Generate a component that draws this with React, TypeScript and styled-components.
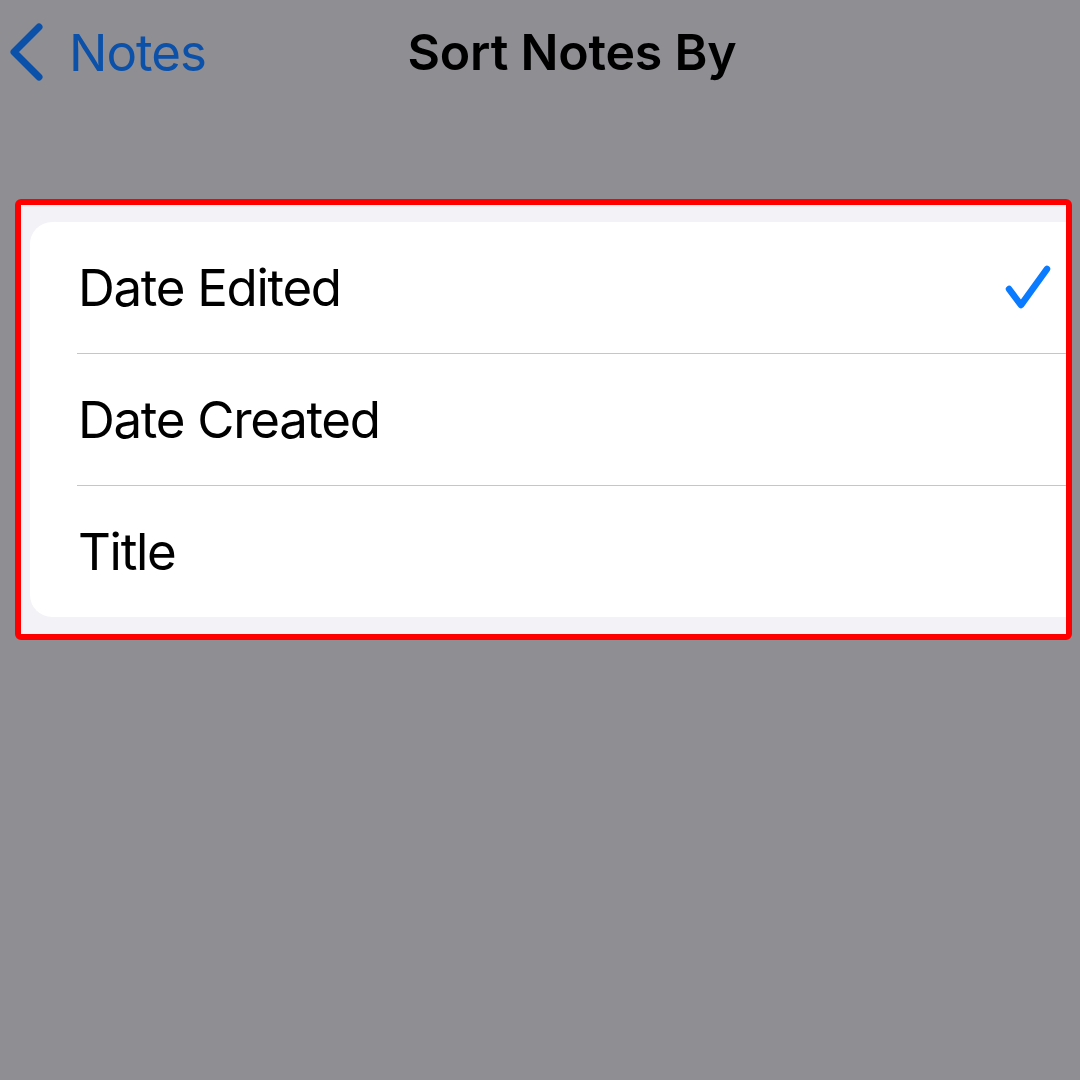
import React from "react";
import styled, { createGlobalStyle } from "styled-components";

const sortOptions = [
  { label: "Date Edited", selected: true },
  { label: "Date Created", selected: false },
  { label: "Title", selected: false },
];

const GlobalStyle = createGlobalStyle`
  html, body {
    margin: 0;
    padding: 0;
    background: #8e8e93;
  }
  body {
    font-family: Inter, "Noto Sans", sans-serif;
    -webkit-font-smoothing: antialiased;
  }
`;

const Screen = styled.div`
  width: 1080px;
  height: 1080px;
  background: #8e8e93;
  overflow: hidden;
  display: flex;
  flex-direction: column;
`;

const NavBar = styled.header`
  height: 104px;
  display: grid;
  grid-template-columns: 1fr auto 1fr;
  align-items: center;
  padding: 0 0 0 9px;
`;

const BackButton = styled.div`
  display: flex;
  align-items: center;
  gap: 26px;
  color: #0c51a9;
  font-size: 51px;
  font-weight: 400;
  letter-spacing: -1px;
`;

const NavTitle = styled.h1`
  margin: 0 0 0 55px;
  font-size: 50px;
  font-weight: 600;
  color: #000;
  letter-spacing: -0.2px;
`;

const Highlight = styled.section`
  margin: 95px 0 0 15px;
  width: 1057px;
  box-sizing: border-box;
  border: 6px solid #ff0000;
  border-radius: 6px;
  background: #f2f2f7;
  padding: 17px 0 17px 9px;
`;

const Card = styled.ul`
  list-style: none;
  margin: 0;
  padding: 0;
  background: #fff;
  border-radius: 22px 0 0 22px;
`;

const Row = styled.li`
  padding-left: 47px;
`;

const RowInner = styled.div<{ $last?: boolean }>`
  height: 131px;
  display: flex;
  align-items: center;
  justify-content: space-between;
  padding-right: 15px;
  border-bottom: ${(p) => (p.$last ? "none" : "1px solid #c6c6c8")};
  font-size: 51px;
  color: #000;
  letter-spacing: -1.3px;
`;

const Label = styled.span`
  padding-left: 1px;
`;

const Chevron = () => (
  <svg width="34" height="58" viewBox="0 0 34 58">
    <path
      d="M30 4 L5 29 L30 54"
      fill="none"
      stroke="currentColor"
      strokeWidth="7"
      strokeLinecap="round"
      strokeLinejoin="round"
    />
  </svg>
);

const Check = () => (
  <svg width="46" height="46" viewBox="0 0 46 46">
    <path
      d="M4 24 L16 40 L42 4"
      fill="none"
      stroke="#0a7aff"
      strokeWidth="6.5"
      strokeLinecap="round"
      strokeLinejoin="round"
    />
  </svg>
);

const App: React.FC = () => {
  return (
    <Screen>
      <GlobalStyle />
      <NavBar>
        <BackButton>
          <Chevron />
          <span>Notes</span>
        </BackButton>
        <NavTitle>Sort Notes By</NavTitle>
        <div />
      </NavBar>

      {/* highlighted options group */}
      <Highlight>
        <Card>
          {sortOptions.map((opt, index) => (
            <Row key={opt.label}>
              <RowInner $last={index === sortOptions.length - 1}>
                <Label>{opt.label}</Label>
                {opt.selected && <Check />}
              </RowInner>
            </Row>
          ))}
        </Card>
      </Highlight>
    </Screen>
  );
};

export default App;
